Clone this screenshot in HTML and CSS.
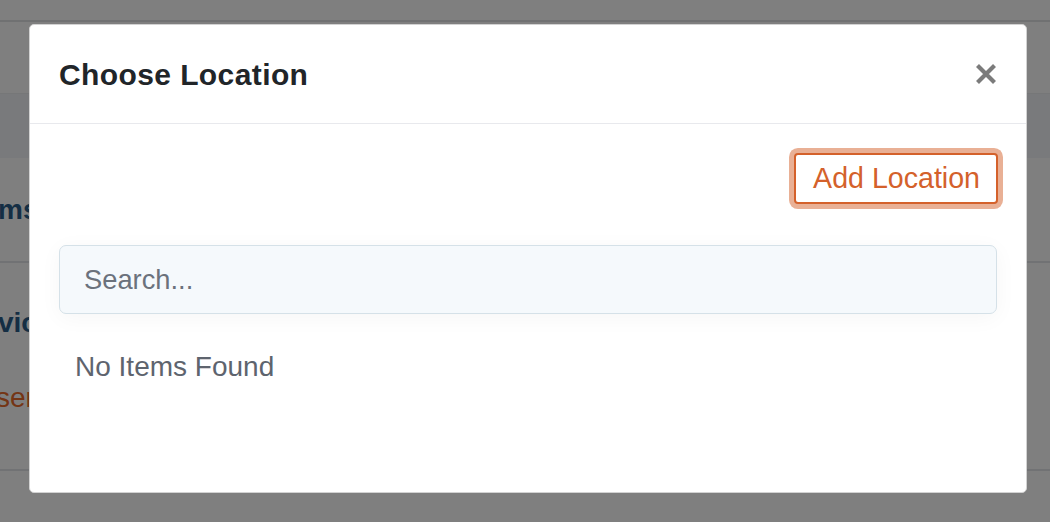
FILE: index.html
```html
<!DOCTYPE html>
<html lang="en">
<head>
	<meta charset="UTF-8">
	<title>Choose Location</title>
	<link rel="stylesheet" href="styles.css">
</head>
<body>
	<div class="page">
		<div class="topbar"></div>
		<div class="tableHead"></div>
		<div class="row">
			<span class="rowTitle">ms</span>
		</div>
		<div class="row tall">
			<span class="rowTitle">vic</span>
			<span class="rowLink">ser</span>
		</div>
	</div>

	<div class="overlay">
		<div class="modal">
			<div class="modalHeader">
				<h3>Choose Location</h3>
				<button class="close" aria-label="Close">
					<svg width="22" height="22" viewBox="0 0 22 22">
						<path d="M2.5 2.5L19.5 19.5M19.5 2.5L2.5 19.5" stroke="#7b7b7b" stroke-width="4.2" fill="none"/>
					</svg>
				</button>
			</div>
			<div class="modalBody">
				<div class="actions">
					<button class="addBtn">Add Location</button>
				</div>
				<input type="text" class="search" placeholder="Search...">
				<p class="empty">No Items Found</p>
			</div>
		</div>
	</div>
</body>
</html>
```

FILE: styles.css
```css
body,h3,p{
	margin: 0;
	padding: 0;
}
body{
	background: #fff;
	font-family: "Liberation Sans", Arial, sans-serif;
	width: 1050px;
	height: 522px;
	overflow: hidden;
	position: relative;
}
.page{
	height: 522px;
}
.topbar{
	height: 20px;
	border-bottom: 2px solid #e0e2e4;
}
.tableHead{
	margin-top: 71px;
	height: 64px;
	background: #f3f5f8;
	border-top: 1px solid #eceef1;
}
.row{
	height: 103px;
	border-bottom: 2px solid #e3e5e8;
	display: flex;
	flex-direction: column;
	justify-content: center;
	font-size: 28px;
}
.row.tall{
	height: 208px;
	justify-content: flex-start;
	padding-top: 44px;
	box-sizing: border-box;
	gap: 43px;
}
.rowTitle{
	color: #2a5d88;
	font-weight: bold;
	margin-left: -2px;
}
.rowLink{
	color: #e86a2a;
	margin-left: -4px;
}
.overlay{
	position: absolute;
	top: 0;
	left: 0;
	right: 0;
	bottom: 0;
	background: rgba(0,0,0,.5);
}
.modal{
	margin: 24px 0 0 29px;
	width: 998px;
	height: 469px;
	box-sizing: border-box;
	background: #fff;
	border: 1px solid #d2d2d2;
	border-radius: 5px;
}
.modalHeader{
	display: flex;
	align-items: center;
	justify-content: space-between;
	height: 98px;
	padding: 0 29px;
	border-bottom: 1px solid #e8e9ed;
}
.modalHeader h3{
	font-size: 30px;
	font-weight: bold;
	letter-spacing: 0.4px;
	color: #212529;
	line-height: 40px;
	margin-top: 2px;
}
.close{
	border: 0;
	background: none;
	padding: 0;
	width: 22px;
	height: 22px;
	display: flex;
}
.modalBody{
	padding: 29px 29px 0;
}
.actions{
	display: flex;
	justify-content: flex-end;
	margin-right: -1px;
}
.addBtn{
	font-family: "Liberation Sans", Arial, sans-serif;
	font-size: 28.6px;
	line-height: 41px;
	padding: 3px 16px 3px 17px;
	color: #d4612b;
	background: #fff;
	border: 2px solid #d4612b;
	border-radius: 4px;
	box-shadow: 0 0 0 5px rgba(212,98,43,.5);
}
.search{
	display: block;
	margin-top: 41px;
	width: 100%;
	height: 69px;
	box-sizing: border-box;
	padding: 0 24px;
	font-family: "Liberation Sans", Arial, sans-serif;
	font-size: 27.3px;
	background: #f5f9fc;
	border: 1px solid #d5e1e8;
	border-radius: 7px;
	box-shadow: 0 4px 22px rgba(0,0,0,.04);
	outline: none;
}
.search::placeholder{
	color: #6b727c;
}
.empty{
	margin-top: 32px;
	padding-left: 16px;
	font-size: 28px;
	line-height: 41px;
	color: #5e646e;
}
```
